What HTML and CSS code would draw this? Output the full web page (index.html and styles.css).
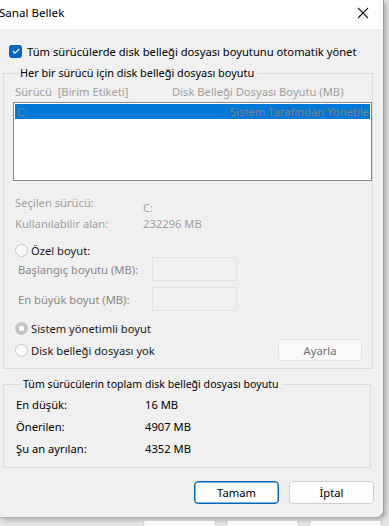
FILE: index.html
```html
<!DOCTYPE html>
<html lang="tr">
<head>
    <meta charset="UTF-8">
    <meta name="viewport" content="width=device-width, initial-scale=1.0">
    <title>Sanal Bellek</title>
    <link rel="stylesheet" href="styles.css">
</head>
<body>

<div class="window">
    <div class="titlebar">
        <span class="title">Sanal Bellek</span>
        <svg class="close" width="12" height="12" viewBox="0 0 12 12">
            <path d="M1 1 L11 11 M11 1 L1 11" stroke="#1a1a1a" stroke-width="1.1" fill="none"/>
        </svg>
    </div>

    <div class="content">
        <label class="check-row">
            <span class="checkbox">
                <svg width="12" height="12" viewBox="0 0 12 12">
                    <path d="M3 6.2 L5 8.2 L9.2 3.8" stroke="#fff" stroke-width="1.2" fill="none"/>
                </svg>
            </span>
            Tüm sürücülerde disk belleği dosyası boyutunu otomatik yönet
        </label>

        <fieldset class="group group-drives">
            <legend>Her bir sürücü için disk belleği dosyası boyutu</legend>

            <div class="col-head">
                <span class="col-drive">Sürücü &nbsp;[Birim Etiketi]</span>
                <span class="col-size">Disk Belleği Dosyası Boyutu (MB)</span>
            </div>

            <div class="listbox">
                <div class="list-row selected">
                    <span>C:</span>
                    <span class="list-size">Sistem Tarafından Yönetilen</span>
                </div>
            </div>

            <div class="info">
                <span class="info-label">Seçilen sürücü:</span>
                <span class="info-value drive-value">C:</span>
                <span class="info-label">Kullanılabilir alan:</span>
                <span class="info-value">232296 MB</span>
            </div>

            <div class="radio-row custom">
                <span class="radio"></span>
                Özel boyut:
            </div>

            <div class="field-row field-initial">
                <span class="field-label">Başlangıç boyutu (MB):</span>
                <span class="field-box"></span>
            </div>
            <div class="field-row field-max">
                <span class="field-label">En büyük boyut (MB):</span>
                <span class="field-box"></span>
            </div>

            <div class="radio-row system">
                <span class="radio checked"></span>
                Sistem yönetimli boyut
            </div>
            <div class="radio-row none">
                <span class="radio"></span>
                Disk belleği dosyası yok
                <button class="btn btn-set" disabled>Ayarla</button>
            </div>
        </fieldset>

        <fieldset class="group group-total">
            <legend>Tüm sürücülerin toplam disk belleği dosyası boyutu</legend>
            <div class="totals">
                <span>En düşük:</span><span>16 MB</span>
                <span>Önerilen:</span><span>4907 MB</span>
                <span>Şu an ayrılan:</span><span>4352 MB</span>
            </div>
        </fieldset>

        <div class="actions">
            <button class="btn btn-ok">Tamam</button>
            <button class="btn">İptal</button>
        </div>
    </div>
</div>

<div class="behind">
    <span class="behind-btn"></span>
    <span class="behind-btn"></span>
    <span class="behind-btn"></span>
</div>

</body>
</html>
```

FILE: styles.css
```css
body {
    margin: 0;
    padding: 0;
    width: 389px;
    height: 526px;
    overflow: hidden;
    background-color: #e4e4e4;
    font-family: "Noto Sans", "Open Sans", sans-serif;
    font-size: 11.2px;
    color: #000;
}
.window {
    width: 384px;
    height: 518px;
    background-color: #f0f0f0;
    border-right: 1px solid #9a9a9a;
    border-bottom: 1px solid #b4b4b4;
    border-radius: 0 0 8px 0;
    box-shadow: 2px 2px 4px rgba(0, 0, 0, 0.25);
    overflow: hidden;
    box-sizing: border-box;
}
.titlebar {
    height: 29px;
    background-color: #fff;
    display: flex;
    align-items: center;
    justify-content: space-between;
    padding: 0 14px 4px 0;
    box-sizing: border-box;
}
.title {
    margin-left: -1px;
    font-size: 11.6px;
}
.content {
    padding: 0 0 0 3px;
}
.check-row {
    display: flex;
    align-items: center;
    gap: 5px;
    height: 16px;
    margin: 14px 0 0 6px;
}
.checkbox {
    width: 13px;
    height: 13px;
    border-radius: 3px;
    background-color: #0067c0;
    display: flex;
    align-items: center;
    justify-content: center;
}
.group {
    margin: 0;
    border: 1px solid #dcdcdc;
    box-sizing: border-box;
    width: 368px;
}
.group legend {
    padding: 0 3px 0 1px;
    margin-left: 6px;
    line-height: 16px;
    font-size: 10.9px;
}
.group-total legend {
    font-size: 10.6px;
}
.group-drives {
    margin-top: 6px;
    height: 304px;
    padding: 3px 0 0 9px;
}
.col-head {
    display: flex;
    height: 16px;
    line-height: 16px;
    color: #a0a0a0;
    padding-left: 2px;
}
.col-drive {
    width: 157px;
}
.listbox {
    margin-top: 2px;
    width: 359px;
    height: 79px;
    background-color: #fff;
    border: 1px solid #828790;
    box-sizing: border-box;
    padding: 1px;
}
.list-row {
    display: grid;
    grid-template-columns: 213px auto;
    height: 15px;
    line-height: 15px;
    padding: 0 0 0 2px;
    white-space: nowrap;
    overflow: hidden;
    color: #808080;
}
.list-row.selected {
    background-color: #0078d7;
}
.info {
    display: grid;
    grid-template-columns: 128px auto;
    row-gap: 5px;
    margin-top: 14px;
    padding-left: 2px;
    color: #a0a0a0;
    line-height: 16px;
}
.drive-value {
    position: relative;
    top: 5px;
}
.radio-row {
    display: flex;
    align-items: center;
    gap: 3px;
    height: 16px;
    padding-left: 2px;
    color: #1a1a1a;
}
.radio-row.custom {
    margin-top: 10px;
}
.radio-row.system {
    margin-top: 9px;
}
.radio-row.none {
    margin-top: 6px;
}
.radio {
    width: 11px;
    height: 11px;
    border-radius: 50%;
    border: 1px solid #c8c8c8;
    background-color: #f9f9f9;
}
.radio.checked {
    background-color: #c5c5c5;
    border-color: #c5c5c5;
    background-image: radial-gradient(circle, #fff 0 2.5px, transparent 3px);
}
.field-row {
    display: flex;
    align-items: center;
    height: 24px;
    color: #8a8a8a;
}
.field-initial {
    margin-top: -1px;
}
.field-max {
    margin-top: 6px;
}
.field-label {
    width: 134px;
    padding-left: 5px;
}
.field-box {
    width: 85px;
    height: 24px;
    border: 1px solid #e2e2e2;
    box-sizing: border-box;
    background-color: #f0f0f0;
}
.btn {
    font-family: inherit;
    font-size: 11.2px;
    height: 23px;
    width: 85px;
    padding: 0;
    background-color: #fdfdfd;
    border: 1px solid #d0d0d0;
    border-radius: 4px;
    color: #000;
}
.btn-set {
    margin-left: auto;
    margin-right: 10px;
    width: 84px;
    height: 22px;
    color: #707070;
    background-color: #f8f8f8;
    border-color: #e3e3e3;
}
.group-total {
    margin-top: 7px;
    height: 92px;
    padding: 5px 0 0 12px;
}
.totals {
    display: grid;
    grid-template-columns: 129px auto;
    row-gap: 6px;
    line-height: 16px;
}
.actions {
    display: flex;
    gap: 10px;
    justify-content: flex-end;
    margin: 13px 9px 0 0;
}
.btn-ok {
    border-color: #0067c0;
    box-shadow: inset 0 0 0 0.5px #0067c0;
}
.behind {
    display: flex;
    gap: 10px;
    padding-left: 143px;
    margin-top: 2px;
}
.behind-btn {
    width: 71px;
    height: 12px;
    background-color: #fbfbfb;
    border: 1px solid #cfcfcf;
    border-radius: 3px;
}
```
